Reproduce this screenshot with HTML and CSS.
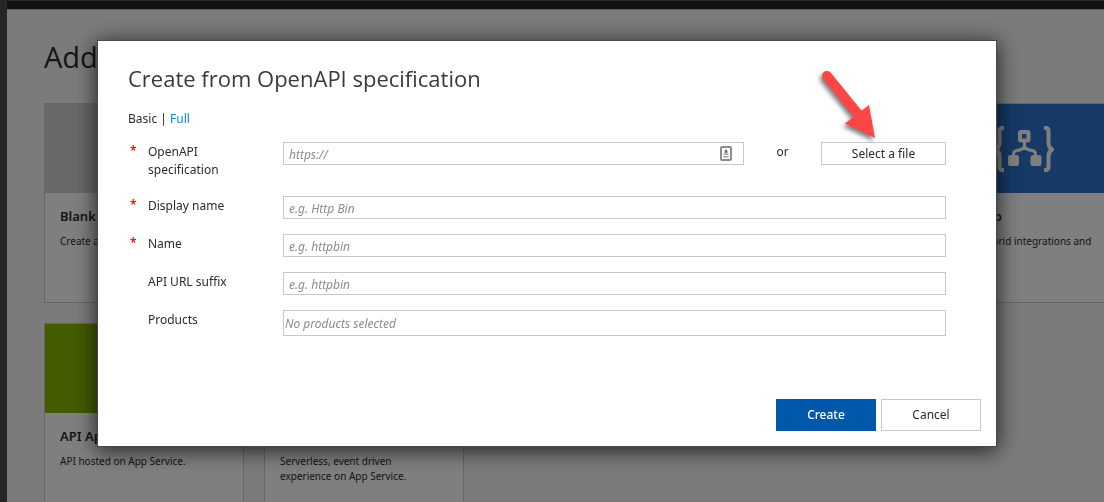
FILE: index.html
```html
<!DOCTYPE html>
<html lang="en">
<head>
<meta charset="utf-8">
<title>Create from OpenAPI specification</title>
<link rel="stylesheet" href="styles.css">
</head>
<body>
<div class="page">
  <div class="topbar"></div>
  <main class="content">
    <h1 class="page-title">Add</h1>
    <div class="cards">
      <section class="card">
        <div class="banner banner-gray"></div>
        <h2 class="card-title">Blank API</h2>
        <p class="card-text">Create a</p>
      </section>
      <section class="card card-last">
        <div class="banner banner-blue">
          <svg class="logic-icon" viewBox="0 0 60 48" fill="none" stroke="#fff" aria-hidden="true">
            <path d="M10 3H8.500Q5.500 3 5.500 6V18Q5.500 22 2 24.500Q5.500 27 5.500 31V42Q5.500 45 8.500 45H10" stroke-width="4"/>
            <path d="M50 3H51.500Q54.500 3 54.500 6V18Q54.500 22 58 24.500Q54.500 27 54.500 31V42Q54.500 45 51.500 45H50" stroke-width="4"/>
            <rect x="26" y="7" width="8.500" height="8.500" rx="1" stroke-width="4"/>
            <path d="M30.500 17V25M19.500 31V29Q19.500 26 23 25.500C26 25.200 28.500 24.500 30.500 22C32.500 24.500 35 25.200 38 25.500Q41.500 26 41.500 29V31" stroke-width="3"/>
            <rect x="14" y="30" width="11" height="11" rx="2.500" fill="#fff" stroke="none"/>
            <rect x="36.500" y="30" width="11" height="11" rx="2.500" fill="#fff" stroke="none"/>
          </svg>
        </div>
        <h2 class="card-title">Logic App</h2>
        <p class="card-text">Scalable hybrid integrations and</p>
      </section>
      <section class="card">
        <div class="banner banner-green"></div>
        <h2 class="card-title">API App</h2>
        <p class="card-text">API hosted on App Service.</p>
      </section>
      <section class="card">
        <div class="banner banner-gray"></div>
        <h2 class="card-title">Function App</h2>
        <p class="card-text">Serverless, event driven experience on App Service.</p>
      </section>
    </div>
  </main>
</div>

<div class="overlay">
  <div class="dialog" role="dialog" aria-labelledby="dialog-title">
    <h2 class="dialog-title" id="dialog-title">Create from OpenAPI specification</h2>
    <div class="mode">Basic | <a href="#full">Full</a></div>
    <form class="form" id="api-form">
      <div class="row row-spec">
        <span class="required">*</span>
        <label for="spec">OpenAPI specification</label>
        <div class="spec">
          <div class="spec-field">
            <input class="field" id="spec" type="text" placeholder="https://">
            <svg class="contact-icon" viewBox="0 0 12 15" aria-hidden="true">
              <rect x="1" y="1" width="10" height="13" rx="1" fill="#fff" stroke="#8c8c8c" stroke-width="2"/>
              <path d="M6 3L7.500 5V7H4.500V5Z" fill="#777"/>
              <path d="M3.500 7.500H8.500V9H3.500ZM3.500 10H8.500V11.500H3.500Z" fill="#999"/>
            </svg>
          </div>
          <span class="or">or</span>
          <button class="select-file" type="button">Select a file</button>
        </div>
      </div>
      <div class="row">
        <span class="required">*</span>
        <label for="display">Display name</label>
        <input class="field" id="display" type="text" placeholder="e.g. Http Bin">
      </div>
      <div class="row">
        <span class="required">*</span>
        <label for="name">Name</label>
        <input class="field" id="name" type="text" placeholder="e.g. httpbin">
      </div>
      <div class="row">
        <span></span>
        <label for="suffix">API URL suffix</label>
        <input class="field" id="suffix" type="text" placeholder="e.g. httpbin">
      </div>
      <div class="row">
        <span></span>
        <label for="products">Products</label>
        <input class="field field-products" id="products" type="text" readonly placeholder="No products selected">
      </div>
    </form>
    <div class="actions">
      <button class="action action-primary" type="submit" form="api-form">Create</button>
      <button class="action" type="button">Cancel</button>
    </div>
    <svg class="arrow" viewBox="0 0 64 80" aria-hidden="true">
      <path d="M11 12L41 49" stroke="#fe4646" stroke-width="10" stroke-linecap="round"/>
      <path d="M53 41L59 74L29 59.500Z" fill="#fe4646"/>
    </svg>
  </div>
</div>
</body>
</html>
```
FILE: styles.css
```css
* {
  box-sizing: border-box;
}

body {
  margin: 0;
  height: 100vh;
  overflow: hidden;
  background: #4d4d4d;
  color: #2b2b2b;
  font-family: "Noto Sans", "Open Sans", sans-serif;
  font-size: 12px;
  line-height: 18px;
}

h1, h2, p {
  margin: 0;
  font-weight: 400;
}

input, button {
  font: inherit;
  color: inherit;
}

.page {
  min-height: 100vh;
  margin-left: 7px;
  background: #f7f7f7;
}

.topbar {
  height: 10px;
  background: #222;
  border-top: 1px solid #505050;
  border-bottom: 1px solid #bbb;
}

.content {
  padding: 27px 0 0 37px;
}

.page-title {
  font-family: "Open Sans", "Noto Sans", sans-serif;
  font-size: 29px;
  line-height: 40px;
  margin-bottom: 26px;
}

.cards {
  display: grid;
  grid-template-columns: repeat(5, 200px);
  gap: 20px;
}

.card {
  height: 200px;
  border: 1px solid #ccc;
  background: #fff;
}

.card-last {
  grid-column: 5;
}

.banner {
  display: flex;
  align-items: center;
  justify-content: center;
  height: 89px;
}

.banner-gray { background: #d2d2d2; }
.banner-blue { background: #2c74cc; }
.banner-green { background: #86b800; }

.logic-icon {
  width: 60px;
  height: 48px;
}

.card-title {
  padding: 14px 15px 8px;
  font-size: 13px;
  font-weight: 600;
  line-height: 18px;
}

.card-text {
  padding: 1px 20px 0 15px;
  font-size: 10px;
  line-height: 15px;
}

.overlay {
  position: fixed;
  inset: 0;
  display: flex;
  align-items: flex-start;
  padding: 41px 108px 0 98px;
  background: rgba(0, 0, 0, 0.5);
}

.dialog {
  position: relative;
  flex: 1;
  padding: 20px 15px 15px 30px;
  background: #fff;
  box-shadow: 0 0 0 1px #484848, 0 3px 20px 2px rgba(0, 0, 0, 0.7);
}

.dialog-title {
  font-family: "Open Sans", "Noto Sans", sans-serif;
  font-size: 22px;
  line-height: 34px;
  color: #3a3a3a;
}

.mode {
  margin: 15px 0 14px;
}

.mode a {
  color: #0f84dd;
  text-decoration: none;
}

.form {
  display: flex;
  flex-direction: column;
  gap: 15px;
  padding-right: 35px;
}

.row {
  display: grid;
  grid-template-columns: 20px 95px minmax(0, 1fr);
  align-items: start;
}

.row .field,
.row .spec {
  margin-left: 40px;
}

.row .spec-field .field {
  margin-left: 0;
}

.row-spec {
  min-height: 39px;
}

.row label,
.or {
  padding-top: 1px;
}

.required {
  padding-left: 2px;
  color: #f00;
  font-weight: 600;
}

.spec {
  display: grid;
  grid-template-columns: minmax(0, 1fr) 77px 125px;
}

.spec-field {
  position: relative;
}

.field {
  display: block;
  width: auto;
  justify-self: stretch;
  height: 23px;
  padding: 1px 5px 0;
  border: 1px solid #c8c8c8;
  border-radius: 0;
  background: #fff;
  outline: 0;
}

.spec-field .field {
  width: 100%;
}

.field::placeholder {
  color: #8c8c8c;
  font-style: italic;
  opacity: 1;
}

.field-products {
  height: 26px;
  padding: 0 1px;
}

.row-spec,
.row {
  margin: 0;
}

.contact-icon {
  position: absolute;
  top: 4px;
  right: 12px;
  width: 12px;
  height: 15px;
}

.or {
  text-align: center;
}

.select-file {
  height: 23px;
  padding: 0;
  border: 1px solid #c8c8c8;
  background: #fff;
}

.actions {
  display: flex;
  justify-content: flex-end;
  gap: 5px;
  margin-top: 63px;
}

.action {
  width: 100px;
  height: 32px;
  padding: 0;
  border: 1px solid #c8c8c8;
  background: #fff;
}

.action-primary {
  border-color: #0058ad;
  background: #0058ad;
  color: #fff;
  font-weight: 500;
}

.arrow {
  position: absolute;
  top: 23px;
  right: 116px;
  width: 64px;
  height: 80px;
  filter: drop-shadow(-2px 3px 2px rgba(0, 0, 0, 0.5));
}
```
